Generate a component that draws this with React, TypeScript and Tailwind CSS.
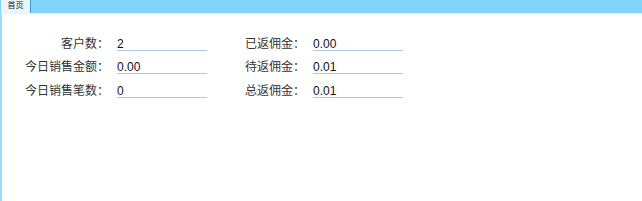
const rows = [
  ["客户数：", "2", "已返佣金：", "0.00"],
  ["今日销售金额：", "0.00", "待返佣金：", "0.01"],
  ["今日销售笔数：", "0", "总返佣金：", "0.01"],
];

function Field({ label, value, labelW }: { label: string; value: string; labelW: string }) {
  return (
    <div className="flex items-start">
      <span className={`${labelW} text-right pr-2 leading-[12px] text-[#333]`}>{label}</span>
      <span className="w-[90px] border-b border-[#a9c9e8] leading-[12px] h-[13px] text-[#111]">{value}</span>
    </div>
  );
}

export default function App() {
  return (
    <div
      className="w-[642px] h-[201px] bg-white text-[12px] flex flex-col"
      style={{ fontFamily: '"Liberation Sans", "Noto Sans CJK SC", sans-serif' }}
    >
      <div className="h-[13px] bg-[#82d3fc] flex items-end pl-[1px]">
        <div className="h-[13px] w-[30px] bg-[#eaf6fd] border-r border-[#3d9dd6] text-[8px] leading-[12px] text-[#222] text-center">
          首页
        </div>
      </div>
      <div className="flex-1 border-l-2 border-[#9fdcfb] border-t border-t-[#eaf7fe] pt-[24px] pl-[11px]">
        <div className="flex flex-col gap-[10.3px]">
          {rows.map((r, i) => (
            <div key={i} className="flex">
              <Field label={r[0]} value={r[1]} labelW="w-[104px]" />
              <Field label={r[2]} value={r[3]} labelW="w-[106px]" />
            </div>
          ))}
        </div>
      </div>
    </div>
  );
}
